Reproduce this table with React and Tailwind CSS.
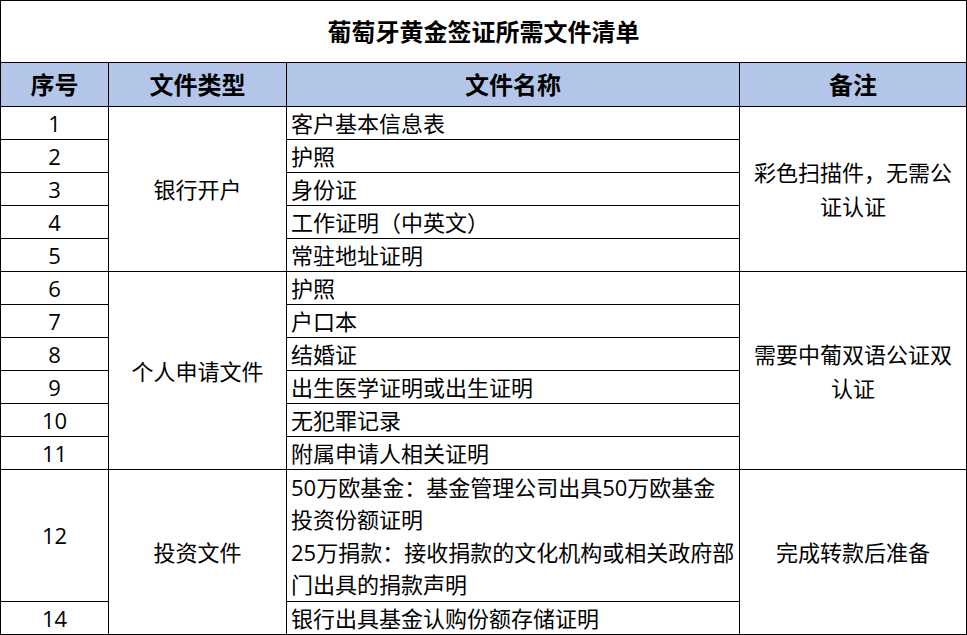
const rows = [
  { no: "1", name: "客户基本信息表" },
  { no: "2", name: "护照" },
  { no: "3", name: "身份证" },
  { no: "4", name: "工作证明（中英文）" },
  { no: "5", name: "常驻地址证明" },
  { no: "6", name: "护照" },
  { no: "7", name: "户口本" },
  { no: "8", name: "结婚证" },
  { no: "9", name: "出生医学证明或出生证明" },
  { no: "10", name: "无犯罪记录" },
  { no: "11", name: "附属申请人相关证明" },
];

const groups = {
  0: { type: "银行开户", span: 5, note: ["彩色扫描件，无需公", "证认证"] },
  5: { type: "个人申请文件", span: 6, note: ["需要中葡双语公证双", "认证"] },
};

const cell = "border border-black text-black p-0";

export default function App() {
  return (
    <div className="w-[967px] h-[635px] bg-white font-['Open_Sans','Noto_Sans_CJK_SC',sans-serif] text-[22px]">
      <table className="w-[966px] border-collapse table-fixed">
        <colgroup>
          <col className="w-[108px]" />
          <col className="w-[178px]" />
          <col className="w-[453px]" />
          <col className="w-[227px]" />
        </colgroup>
        <tbody>
          <tr className="h-[62px]">
            <td colSpan={4} className={`${cell} text-center text-[24px] font-bold leading-[30px]`}>
              葡萄牙黄金签证所需文件清单
            </td>
          </tr>
          <tr className="h-[44px] bg-[#b4c6e7]">
            {["序号", "文件类型", "文件名称", "备注"].map((h) => (
              <td key={h} className={`${cell} text-center text-[24px] font-bold leading-[30px]`}>
                {h}
              </td>
            ))}
          </tr>
          {rows.map((r, i) => (
            <tr key={r.no} className="h-[33px] leading-[30px]">
              <td className={`${cell} text-center`}>{r.no}</td>
              {groups[i] && (
                <td rowSpan={groups[i].span} className={`${cell} text-center`}>
                  {groups[i].type}
                </td>
              )}
              <td className={`${cell} pl-[4px] whitespace-nowrap`}>{r.name}</td>
              {groups[i] && (
                <td rowSpan={groups[i].span} className={`${cell} text-center leading-[34px]`}>
                  {groups[i].note[0]}
                  <br />
                  {groups[i].note[1]}
                </td>
              )}
            </tr>
          ))}
          <tr className="h-[132px]">
            <td className={`${cell} text-center`}>12</td>
            <td rowSpan={2} className={`${cell} text-center`}>
              投资文件
            </td>
            <td className={`${cell} pl-[4px] whitespace-nowrap leading-[32.5px]`}>
              50万欧基金：基金管理公司出具50万欧基金
              <br />
              投资份额证明
              <br />
              25万捐款：接收捐款的文化机构或相关政府部
              <br />
              门出具的捐款声明
            </td>
            <td rowSpan={2} className={`${cell} text-center`}>
              完成转款后准备
            </td>
          </tr>
          <tr className="h-[33px] leading-[30px]">
            <td className={`${cell} text-center`}>14</td>
            <td className={`${cell} pl-[4px] whitespace-nowrap`}>银行出具基金认购份额存储证明</td>
          </tr>
        </tbody>
      </table>
    </div>
  );
}
